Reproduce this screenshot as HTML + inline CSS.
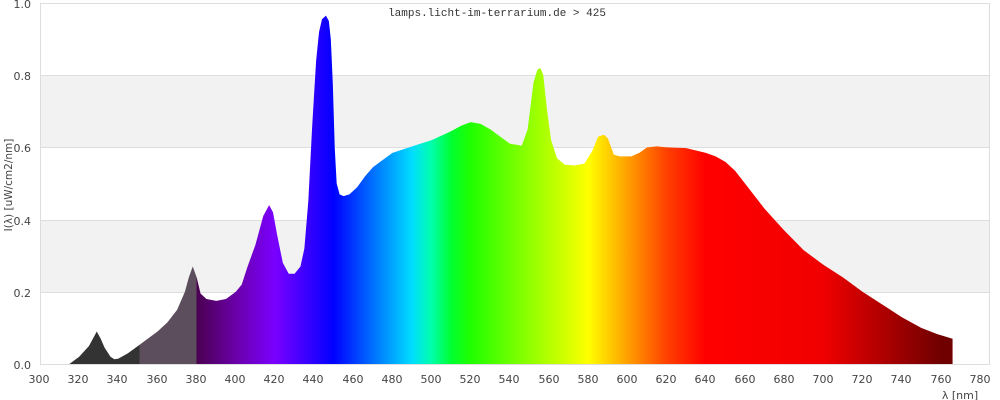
<!DOCTYPE html>
<html><head><meta charset="utf-8"><style>
html,body{margin:0;padding:0;background:#fff;width:1000px;height:400px;overflow:hidden}
svg text{font-family:"DejaVu Sans","Liberation Sans",sans-serif;font-size:11px;fill:#444}
</style></head><body>
<svg width="1000" height="400" viewBox="0 0 1000 400">
<rect x="40" y="75" width="950" height="72" fill="#f2f2f2"/>
<rect x="40" y="220" width="950" height="72" fill="#f2f2f2"/>
<g stroke="#ddd" stroke-width="1">
<line x1="40" y1="3.5" x2="990" y2="3.5"/>
<line x1="40" y1="75.5" x2="990" y2="75.5"/>
<line x1="40" y1="147.5" x2="990" y2="147.5"/>
<line x1="40" y1="220.5" x2="990" y2="220.5"/>
<line x1="40" y1="292.5" x2="990" y2="292.5"/>
<line x1="40" y1="364.5" x2="990" y2="364.5"/>
<line x1="40.5" y1="3" x2="40.5" y2="365"/>
<line x1="989.5" y1="3" x2="989.5" y2="365"/>
</g>
<defs>
<linearGradient id="sp" gradientUnits="userSpaceOnUse" x1="0" y1="0" x2="480" y2="0">
<stop offset="0.0" stop-color="#333"/>
<stop offset="0.106" stop-color="#333"/>
<stop offset="0.106" stop-color="#5c4e5c"/>
<stop offset="0.1667" stop-color="#5c4e5c"/>
<stop offset="0.1667" stop-color="#4a0050"/>
<stop offset="0.2083" stop-color="#6a00a8"/>
<stop offset="0.25" stop-color="#7a00ff"/>
<stop offset="0.2917" stop-color="#2a00ff"/>
<stop offset="0.3125" stop-color="#0000ff"/>
<stop offset="0.3542" stop-color="#0070ff"/>
<stop offset="0.3958" stop-color="#00ddff"/>
<stop offset="0.4167" stop-color="#00ffaa"/>
<stop offset="0.4375" stop-color="#00ff30"/>
<stop offset="0.4583" stop-color="#20ff00"/>
<stop offset="0.5208" stop-color="#90ff00"/>
<stop offset="0.5625" stop-color="#d8ff00"/>
<stop offset="0.5833" stop-color="#ffff00"/>
<stop offset="0.625" stop-color="#ffa000"/>
<stop offset="0.6667" stop-color="#ff4000"/>
<stop offset="0.7083" stop-color="#ff0000"/>
<stop offset="0.8333" stop-color="#f00000"/>
<stop offset="0.9583" stop-color="#700000"/>
</linearGradient>
</defs>
<g transform="translate(40,364) scale(1.9583,-361)">
<path fill="url(#sp)" d="M15 0 L20 0.02 L25 0.05 L27 0.07 L29 0.09 L31 0.07 L33 0.045 L36 0.02 L38 0.013 L40 0.015 L45 0.03 L50 0.05 L55 0.07 L60 0.09 L65 0.115 L70 0.15 L74 0.2 L76 0.24 L78 0.27 L80 0.24 L82 0.195 L85 0.18 L90 0.175 L95 0.18 L100 0.2 L103 0.22 L106 0.27 L110 0.33 L114 0.41 L117 0.44 L119 0.42 L121 0.36 L124 0.28 L127 0.25 L130 0.25 L133 0.27 L135 0.32 L137 0.45 L139 0.66 L141 0.84 L142.5 0.92 L144 0.955 L146 0.965 L147.5 0.95 L148.5 0.9 L149.5 0.78 L150.5 0.6 L151.5 0.5 L153 0.47 L155 0.465 L158 0.47 L162 0.49 L166 0.52 L170 0.545 L175 0.565 L180 0.585 L190 0.603 L200 0.62 L210 0.645 L215 0.66 L220 0.67 L225 0.665 L230 0.65 L235 0.63 L240 0.61 L246 0.605 L249 0.65 L252 0.78 L254 0.815 L255.5 0.82 L257 0.8 L259 0.7 L261 0.62 L264 0.57 L268 0.552 L273 0.55 L278 0.555 L282 0.59 L285 0.63 L288 0.635 L290 0.625 L293 0.58 L296 0.575 L302 0.575 L306 0.585 L310 0.6 L315 0.603 L320 0.6 L330 0.598 L340 0.585 L345 0.575 L350 0.56 L355 0.535 L360 0.5 L365 0.465 L370 0.43 L375 0.4 L380 0.37 L390 0.315 L400 0.275 L410 0.24 L420 0.2 L430 0.165 L440 0.13 L450 0.1 L458 0.083 L466 0.07 L466 0 Z"/>
</g>
<text x="497" y="16" text-anchor="middle" style="font-family:'Liberation Mono','DejaVu Sans Mono',monospace;font-size:11px;fill:#333">lamps.licht-im-terrarium.de &gt; 425</text>
<g text-anchor="end">
<text x="31" y="8">1.0</text>
<text x="31" y="80">0.8</text>
<text x="31" y="152">0.6</text>
<text x="31" y="225">0.4</text>
<text x="31" y="297">0.2</text>
<text x="31" y="369">0.0</text>
</g>
<g text-anchor="middle">
<text x="39" y="383">300</text><text x="78" y="383">320</text><text x="117" y="383">340</text><text x="157" y="383">360</text><text x="196" y="383">380</text><text x="235" y="383">400</text><text x="274" y="383">420</text><text x="313" y="383">440</text><text x="353" y="383">460</text><text x="392" y="383">480</text><text x="431" y="383">500</text><text x="470" y="383">520</text><text x="509" y="383">540</text><text x="549" y="383">560</text><text x="588" y="383">580</text><text x="627" y="383">600</text><text x="666" y="383">620</text><text x="705" y="383">640</text><text x="745" y="383">660</text><text x="784" y="383">680</text><text x="823" y="383">700</text><text x="862" y="383">720</text><text x="901" y="383">740</text><text x="941" y="383">760</text><text x="980" y="383">780</text>
</g>
<text x="960" y="399" text-anchor="middle">λ [nm]</text>
<text transform="translate(12,185) rotate(-90)" text-anchor="middle" style="font-size:10.5px">I(λ)  [uW/cm2/nm]</text>
</svg>
</body></html>
